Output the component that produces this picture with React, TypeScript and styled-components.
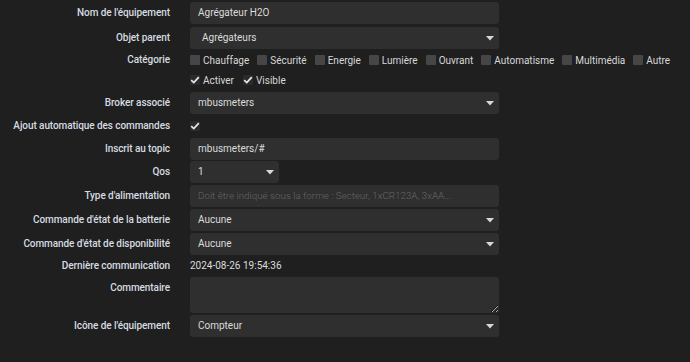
import React from "react";
import styled, { createGlobalStyle } from "styled-components";

const Global = createGlobalStyle`
  html, body { margin: 0; padding: 0; background: #1f1f1f; }
  body { font-family: Roboto, "Noto Sans", "Liberation Sans", sans-serif; }
  * { box-sizing: border-box; }
`;

const Form = styled.div`
  width: 690px;
  height: 362px;
  background: #1f1f1f;
  padding-top: 2px;
  display: flex;
  flex-direction: column;
  overflow: hidden;
`;

const Row = styled.div<{ $gap?: number; $h?: number }>`
  display: grid;
  grid-template-columns: 170px 309px;
  column-gap: 20px;
  align-items: start;
  margin-top: ${(p) => p.$gap ?? 0}px;
  min-height: ${(p) => p.$h ?? 22}px;
`;

const Label = styled.div<{ $lh?: number }>`
  text-align: right;
  color: #d6dbe0;
  font-size: 10px;
  font-weight: 500;
  letter-spacing: -0.08px;
  line-height: ${(p) => p.$lh ?? 22}px;
  white-space: nowrap;
`;

const Field = styled.div<{ $w?: number; $pad?: number; $placeholder?: boolean }>`
  position: relative;
  width: ${(p) => p.$w ?? 309}px;
  height: 22px;
  background: #2f2f2f;
  border-radius: 3px;
  padding-left: ${(p) => p.$pad ?? 8}px;
  color: ${(p) => (p.$placeholder ? "#666" : "#dcdcdc")};
  font-size: ${(p) => (p.$placeholder ? 9.8 : 10)}px;
  font-weight: ${(p) => (p.$placeholder ? 300 : 400)};
  line-height: 22px;
  white-space: nowrap;
  overflow: hidden;
`;

const Arrow = styled.svg`
  position: absolute;
  right: 5px;
  top: 9px;
`;

const TextArea = styled.textarea`
  width: 309px;
  height: 36px;
  background: #2f2f2f;
  border: none;
  border-radius: 3px;
  resize: vertical;
  outline: none;
  color: #dcdcdc;
  display: block;
`;

const Plain = styled.div`
  color: #dcdcdc;
  font-size: 10px;
  line-height: 22px;
`;

const Checks = styled.div<{ $h: number }>`
  display: flex;
  align-items: center;
  height: ${(p) => p.$h}px;
  white-space: nowrap;
`;

const CheckItem = styled.div<{ $after: number }>`
  display: flex;
  align-items: center;
  margin-right: ${(p) => p.$after}px;
  color: #d8d8d8;
  font-size: 10px;
`;

const Box = styled.span<{ $checked?: boolean }>`
  display: inline-flex;
  align-items: center;
  justify-content: center;
  width: 10px;
  height: 10px;
  margin-right: 3px;
  background: ${(p) => (p.$checked ? "#2b2b2b" : "#464646")};
  border-radius: 1px;
`;

const Tick = () => (
  <svg width="10" height="10" viewBox="0 0 10 10">
    <path d="M1.2 5.2 L3.8 7.6 L8.8 2.2" fill="none" stroke="#e6e6e6" strokeWidth="1.8" />
  </svg>
);

const Check = ({ label, checked, after }: { label?: string; checked?: boolean; after: number }) => (
  <CheckItem $after={after}>
    <Box $checked={checked}>{checked && <Tick />}</Box>
    {label}
  </CheckItem>
);

const Select = ({ value, w, pad }: { value: string; w?: number; pad?: number }) => (
  <Field $w={w} $pad={pad}>
    {value}
    <Arrow width="8" height="5" viewBox="0 0 8 5">
      <path d="M0 0 H8 L4 4.5 Z" fill="#d8d8d8" />
    </Arrow>
  </Field>
);

const cats = ["Chauffage", "Sécurité", "Energie", "Lumière", "Ouvrant", "Automatisme", "Multimédia", "Autre"];

export default function App() {
  return (
    <>
      <Global />
      <Form>
        <Row>
          <Label>Nom de l'équipement</Label>
          <Field>Agrégateur H2O</Field>
        </Row>
        <Row $gap={3}>
          <Label>Objet parent</Label>
          <Select value="Agrégateurs" pad={12} />
        </Row>
        <Row $gap={1} $h={20}>
          <Label $lh={20}>Catégorie</Label>
          <Checks $h={20}>
            {cats.map((c) => (
              <Check key={c} label={c} after={8} />
            ))}
          </Checks>
        </Row>
        <Row $h={20}>
          <Label $lh={20}></Label>
          <Checks $h={20}>
            <Check label="Activer" checked after={9} />
            <Check label="Visible" checked after={0} />
          </Checks>
        </Row>
        <Row $gap={2}>
          <Label>Broker associé</Label>
          <Select value="mbusmeters" />
        </Row>
        <Row $h={24}>
          <Label $lh={24}>Ajout automatique des commandes</Label>
          <Checks $h={24}>
            <Check checked after={0} />
          </Checks>
        </Row>
        <Row>
          <Label>Inscrit au topic</Label>
          <Field>mbusmeters/#</Field>
        </Row>
        <Row $gap={1}>
          <Label>Qos</Label>
          <Select value="1" w={89} />
        </Row>
        <Row $gap={2}>
          <Label>Type d'alimentation</Label>
          <Field $placeholder>Doit être indiqué sous la forme : Secteur, 1xCR123A, 3xAA...</Field>
        </Row>
        <Row $gap={2}>
          <Label>Commande d'état de la batterie</Label>
          <Select value="Aucune" />
        </Row>
        <Row $gap={2}>
          <Label>Commande d'état de disponibilité</Label>
          <Select value="Aucune" />
        </Row>
        <Row>
          <Label>Dernière communication</Label>
          <Plain>2024-08-26 19:54:36</Plain>
        </Row>
        <Row $h={36}>
          <Label>Commentaire</Label>
          <TextArea defaultValue="" />
        </Row>
        <Row $gap={2}>
          <Label>Icône de l'équipement</Label>
          <Select value="Compteur" />
        </Row>
      </Form>
    </>
  );
}
